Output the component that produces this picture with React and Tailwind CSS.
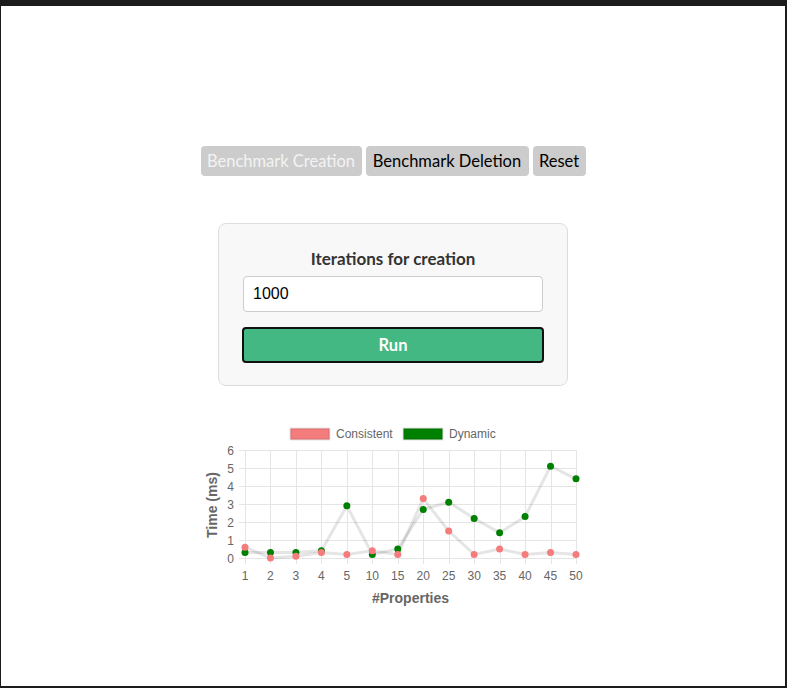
import React from "react";

const labels = ["1", "2", "3", "4", "5", "10", "15", "20", "25", "30", "35", "40", "45", "50"];
const consistent = [0.6, 0, 0.1, 0.3, 0.2, 0.4, 0.2, 3.3, 1.5, 0.2, 0.5, 0.2, 0.3, 0.2];
const dynamic = [0.3, 0.3, 0.3, 0.4, 2.9, 0.2, 0.5, 2.7, 3.1, 2.2, 1.4, 2.3, 5.1, 4.4];

const px = (i) => 52 + i * (331 / 13);
const py = (v) => 138 - 18 * v;

function Chart() {
  const line = (data) => data.map((v, i) => `${px(i)},${py(v)}`).join(" ");
  return (
    <svg width="400" height="190" viewBox="0 0 400 190" style={{ fontFamily: "'Liberation Sans', Arial, sans-serif" }}>
      {/* legend */}
      <rect x="97.5" y="8.5" width="39" height="11" fill="#f47c7c" stroke="rgba(0,0,0,0.1)" strokeWidth="2" />
      <text x="143" y="18" fontSize="12" fill="#666">Consistent</text>
      <rect x="210.5" y="8.5" width="39" height="11" fill="#008000" stroke="rgba(0,0,0,0.1)" strokeWidth="2" />
      <text x="256" y="18" fontSize="12" fill="#666">Dynamic</text>

      {/* horizontal grid */}
      {[0, 1, 2, 3, 4, 5, 6].map((v) => (
        <g key={v}>
          <line x1="46" x2="383" y1={py(v) + 0.5} y2={py(v) + 0.5} stroke="#e5e5e5" />
          <text x="41" y={py(v) + 4.5} fontSize="12" fill="#666" textAnchor="end">{v}</text>
        </g>
      ))}
      {/* vertical grid */}
      {labels.map((l, i) => (
        <g key={l}>
          <line x1={Math.round(px(i)) + 0.5} x2={Math.round(px(i)) + 0.5} y1="30" y2="144" stroke="#e5e5e5" />
          <text x={px(i)} y="160" fontSize="12" fill="#666" textAnchor="middle">{l}</text>
        </g>
      ))}

      {/* lines */}
      <polyline points={line(dynamic)} fill="none" stroke="rgba(0,0,0,0.1)" strokeWidth="3" />
      <polyline points={line(consistent)} fill="none" stroke="rgba(0,0,0,0.1)" strokeWidth="3" />
      {dynamic.map((v, i) => (
        <circle key={"d" + i} cx={px(i)} cy={py(v)} r="3.5" fill="#008000" />
      ))}
      {consistent.map((v, i) => (
        <circle key={"c" + i} cx={px(i)} cy={py(v)} r="3.5" fill="#f47c7c" />
      ))}

      {/* axis titles */}
      <text x="217.5" y="183" fontSize="14" fontWeight="bold" fill="#666" textAnchor="middle">#Properties</text>
      <text x="0" y="0" fontSize="14" fontWeight="bold" fill="#666" textAnchor="middle" transform="translate(24 85) rotate(-90)">Time (ms)</text>
    </svg>
  );
}

export default function App() {
  return (
    <div className="h-[688px] w-full bg-white border-t-[6px] border-l border-r-2 border-b-2 border-[#1c1c1c] overflow-hidden">
      <div className="flex flex-col items-center pt-[140px] font-['Lato',sans-serif]">
        <div className="flex gap-[4px]">
          <button disabled className="w-[161px] h-[30px] rounded-[4px] bg-[#cccccc] text-[#f3f3f3] text-[16.5px]">
            Benchmark Creation
          </button>
          <button className="w-[163px] h-[30px] rounded-[4px] bg-[#cccccc] text-black text-[16.5px]">
            Benchmark Deletion
          </button>
          <button className="w-[53px] h-[30px] rounded-[4px] bg-[#cccccc] text-black text-[16.5px]">
            Reset
          </button>
        </div>

        <div className="mt-[47px] w-[350px] border border-[#dddddd] rounded-lg bg-[#f8f8f8] px-6 pt-[23px] pb-[22px] flex flex-col items-center">
          <label className="leading-6 text-[17px] font-bold text-[#333]">Iterations for creation</label>
          <input
            type="text"
            defaultValue="1000"
            className="mt-[5px] w-[300px] h-[36px] px-[9px] bg-white border border-[#cccccc] rounded-[4px] text-[16px] text-black font-['Liberation_Sans',Arial,sans-serif] outline-none"
          />
          <button className="mt-[15px] w-[302px] h-[36px] rounded-[4px] border-2 border-[#111] bg-[#43b883] text-white font-bold text-[16.5px]">
            Run
          </button>
        </div>

        <div className="mt-[34px]">
          <Chart />
        </div>
      </div>
    </div>
  );
}
